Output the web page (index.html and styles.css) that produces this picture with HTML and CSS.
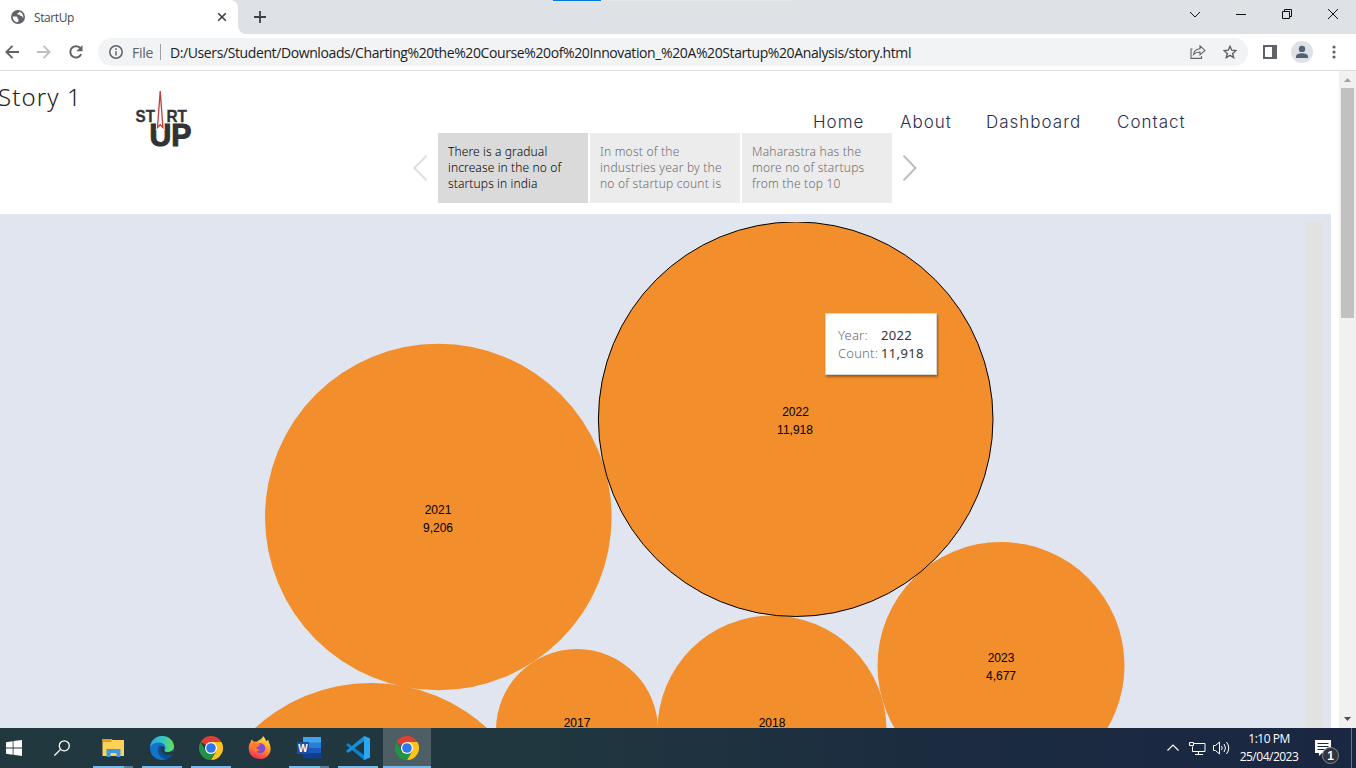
FILE: index.html
```html
<!DOCTYPE html>
<html lang="en">
<head>
<meta charset="utf-8">
<title>StartUp</title>
<link rel="stylesheet" href="styles.css">
</head>
<body>
<svg width="0" height="0" class="defs">
  <symbol id="chrome" viewBox="0 0 24 24">
    <path d="M12 12 1.6 6A12 12 0 0 1 22.4 6z" fill="#dd4034"/>
    <path d="M12 6H22.4A12 12 0 0 1 12 24l5.2-9z" fill="#fcc31e"/>
    <path d="M12 24A12 12 0 0 1 1.6 6l5.2 9 10.4 0z" fill="#229342"/>
    <circle cx="12" cy="12" r="6" fill="#fff"/><circle cx="12" cy="12" r="4.8" fill="#2f78ec"/>
  </symbol>
</svg>
<div class="tabstrip">
  <div class="tab">
    <svg class="favicon" width="14" height="14" viewBox="0 0 14 14"><circle cx="7" cy="7" r="7" fill="#5f6368"/><path d="M1.700 6.600h3.200c1 0 1.500.5 1.500 1.300v.9h1.100v2.300c-.2.800-.8 1.200-1.500 1.100C3.200 11.700 1.600 9.300 1.700 6.600zM8.200 1.800c-.2 1-.8 1.400-1.800 1.400v1.300h2.300v1.300h1.500c.8.200 1.100.8 1.200 1.600h.9C12.500 4.600 10.800 2.400 8.200 1.800z" fill="#fff"/></svg>
    <span class="tab-title">StartUp</span>
    <svg width="10" height="10" viewBox="0 0 10 10"><path d="M1.200 1.200l7.600 7.600M8.800 1.200L1.200 8.800" stroke="#3c4043" stroke-width="1.600"/></svg>
  </div>
  <svg class="curve" width="8" height="8"><path d="M0 0v8h8A8 8 0 0 1 0 0z" fill="#fff"/></svg>
  <svg class="newtab" width="12" height="12"><path d="M6 0v12M0 6h12" stroke="#3c4043" stroke-width="1.800"/></svg>
  <div class="loadbar"><i></i></div>
  <div class="winbtns">
    <svg width="12" height="12" fill="none" stroke="#111"><path d="M1 4l5 5 5-5"/></svg>
    <svg width="12" height="12" fill="none" stroke="#111"><path d="M1 6.500h10"/></svg>
    <svg width="12" height="12" fill="none" stroke="#111"><path d="M1.500 3.500h7v7h-7zM3.500 3.500v-2h7v7h-2"/></svg>
    <svg width="12" height="12" fill="none" stroke="#111"><path d="M1 1l10 10M11 1L1 11"/></svg>
  </div>
</div>
<div class="toolbar">
  <svg class="t-back" width="14" height="14" fill="none" stroke="#5f6368" stroke-width="1.900"><path d="M14 7H1.500M7.500 .8L1.300 7l6.200 6.200"/></svg>
  <svg class="t-fwd" width="14" height="14" fill="none" stroke="#bdc1c6" stroke-width="1.900"><path d="M0 7h12.500M6.500 .8L12.700 7l-6.200 6.200"/></svg>
  <svg class="t-reload" width="16" height="16" fill="none"><path d="M13.200 10.200A5.700 5.700 0 1 1 12 3.800" stroke="#5f6368" stroke-width="2"/><path d="M14.500 1v6.200H8.300z" fill="#5f6368"/></svg>
  <div class="omnibox">
    <svg width="14" height="14" fill="none" stroke="#5f6368" stroke-width="1.500"><circle cx="7" cy="7" r="6.200"/><path d="M7 6.200v4.300M7 3.300v1.700"/></svg>
    <span class="scheme">File</span><i class="sep"></i>
    <span class="url">D:/Users/Student/Downloads/Charting%20the%20Course%20of%20Innovation_%20A%20Startup%20Analysis/story.html</span>
    <svg class="share" width="16" height="14" fill="none" stroke="#5f6368" stroke-width="1.100"><path d="M2.500 4H1v9.400h10.500V11M3.500 9.500C4 6 6.500 3.800 10 3.700V.9l5 4.500-5 4.400V7C7 7 5 7.800 3.500 9.500z"/></svg>
    <svg class="star" width="14" height="14" fill="none" stroke="#5f6368" stroke-width="1.400"><path d="M7 1.300l1.700 3.900 4.200.4-3.200 2.800 1 4.200L7 10.400l-3.700 2.200 1-4.200L1.100 5.600l4.200-.4z"/></svg>
  </div>
  <svg class="panel" width="14" height="14"><path d="M0 0h14v14H0zM2 2v10h7V2z" fill="#5f6368" fill-rule="evenodd"/></svg>
  <svg class="avatar" width="22" height="22"><circle cx="11" cy="11" r="11" fill="#dee1e6"/><circle cx="11" cy="7.900" r="3.200" fill="#566075"/><path d="M5 17v-1.500c0-2 3-3.200 6-3.200s6 1.200 6 3.200V17z" fill="#566075"/></svg>
  <svg class="dots" width="4" height="14" fill="#5f6368"><circle cx="2" cy="2" r="1.600"/><circle cx="2" cy="7" r="1.600"/><circle cx="2" cy="12" r="1.600"/></svg>
</div>
<main class="viewport">
  <div class="page">
    <header class="masthead">
      <h1>Story 1</h1>
      <svg class="logo" width="58" height="60" viewBox="0 0 58 60">
        <g class="logo-text"><text x="0.500" y="33" font-size="17" textLength="19.500" lengthAdjust="spacingAndGlyphs">ST</text><text x="31.500" y="33" font-size="17" textLength="20.500" lengthAdjust="spacingAndGlyphs">RT</text>
        <text class="up" x="14.500" y="57" font-size="31" textLength="42" lengthAdjust="spacingAndGlyphs">UP</text></g>
        <path d="M25.200 3L22 39l3.200-3 3.200 3z" fill="#fff" stroke="#fff" stroke-width="2"/>
        <path d="M25.200 2L22.500 38.500l2.700-2.800 2.700 2.800z" fill="#fff" stroke="#c23c40" stroke-width="1.300"/>
      </svg>
      <nav><a class="n1">Home</a><a class="n2">About</a><a class="n3">Dashboard</a><a class="n4">Contact</a></nav>
    </header>
    <section class="story">
      <svg width="14" height="26" fill="none" stroke="#dedede" stroke-width="2"><path d="M13.500 .7L1.500 13l12 12.300"/></svg>
      <div class="points">
        <p class="on">There is a gradual<br>increase in the no of<br>startups in india</p>
        <p>In most of the<br>industries year by the<br>no of startup count is</p>
        <p>Maharastra has the<br>more no of startups<br>from the top 10</p>
      </div>
      <svg width="14" height="26" fill="none" stroke="#bdbdbd" stroke-width="2"><path d="M.5 .7l12 12.300-12 12.300"/></svg>
    </section>
    <section class="chart">
      <svg width="1306" height="506" viewBox="0 222 1306 506">
        <g fill="#f28e2b"><circle cx="438.300" cy="517" r="173.300"/><circle cx="1001" cy="665.500" r="123.500"/><circle cx="772" cy="730" r="114.500"/><circle cx="577" cy="730" r="81"/><circle cx="371" cy="855" r="172"/><circle cx="795.700" cy="419.200" r="197.300" stroke="#000"/></g>
        <g class="labels"><text x="795.500" y="416">2022</text><text x="795" y="434">11,918</text><text x="438" y="514">2021</text><text x="438" y="532">9,206</text><text x="1001" y="662">2023</text><text x="1001" y="680">4,677</text><text x="577" y="727">2017</text><text x="772" y="727">2018</text></g>
      </svg>
      <div class="legend"></div>
      <dl class="tip"><dt>Year:</dt><dd>2022</dd><dt>Count:</dt><dd>11,918</dd></dl>
    </section>
  </div>
  <div class="scroll">
    <svg width="17" height="17"><path d="M5 11h7L8.500 7z" fill="#a3a3a3"/></svg>
    <div class="thumb"></div>
    <svg width="17" height="17"><path d="M5 6h7l-3.500 4z" fill="#505050"/></svg>
  </div>
</main>
<footer class="taskbar">
  <svg class="win" width="16" height="16" fill="#fff"><path d="M0 2.200L6.700 1.200v6.300H0zM7.500 1.100L16 0v7.500H7.500zM0 8.500h6.700v6.300L0 13.800zM7.500 8.500H16V16l-8.500-1.200z"/></svg>
  <svg class="search" width="16" height="16" fill="none" stroke="#fff" stroke-width="1.300"><circle cx="10.300" cy="5.800" r="5"/><path d="M6.600 9.400L.4 15.600"/></svg>
  <div class="apps">
    <span class="app multi"><svg width="22" height="24" viewBox="0 0 22 24"><path d="M.5 3h9l1 1H22v16H.5z" fill="#ffd257"/><path d="M.5 3h9v3h-9z" fill="#e5a00d"/><path d="M4.500 21v-8h14v8h-4v-4h-6v4z" fill="#3f97dc"/></svg></span>
    <span class="app"><svg width="24" height="24" viewBox="0 0 24 24"><defs><linearGradient id="eg"><stop stop-color="#2aa5e0"/><stop offset=".5" stop-color="#35c5c9"/><stop offset="1" stop-color="#65de50"/></linearGradient></defs><circle cx="12" cy="12" r="12" fill="#1273c9"/><path d="M0 11C1 4 6 0 12 0c7 0 12 5 12 10.500 0 3.500-3 5.500-6 5.500-2 0-3.500-.6-3.500-1.600 0-.8 1-1.200 1-2.700C15.500 9 13 6.500 9 6.500 5 6.500 1.500 8.500 0 11z" fill="url(#eg)"/><path d="M9 10c-3 6 1 13 8 13 2.500-.8 4.500-2.500 5.600-4.600C17 21 10.500 18 10.500 13c0-1.500.5-2 1.500-2.900A5 5 0 0 0 9 10z" fill="#0c4d98"/><path d="M10.500 13c0-1.700 1-2.800 2-3 1.500.6 2.500 2.300 1.900 3.700-1 1.700 1.800 3.300 5.600 2.100l3.600-1.600-1 4.200C17 21 10.500 18 10.500 13z" fill="#213b43"/></svg></span>
    <span class="app"><svg width="24" height="24"><use href="#chrome"/></svg></span>
    <span class="app idle"><svg width="24" height="24" viewBox="0 0 24 24"><defs><linearGradient id="fg" x1=".7" x2=".3" y1="0" y2="1"><stop stop-color="#ffe84b"/><stop offset=".5" stop-color="#ff9225"/><stop offset="1" stop-color="#f3245f"/></linearGradient></defs><path d="M15 0c2 2 2.700 3.600 3 5l2.500-1c-.1 1.600.5 2.500 1.200 4 3 8-2 15-9.500 15S.5 18 .7 11.500c.1-2.700 1-4 2-5.500l.6-2.400 2.400 2 3.400.1C10.500 4 14 3.500 15 0z" fill="url(#fg)"/><circle cx="12.300" cy="12.300" r="5" fill="#8547d5"/><path d="M3.500 7c3-1.500 5-.5 6 1l3 .6c-.5 1.700-2 1.700-3.500 2.400-1 1.400.5 3 3 2.600-1.500 2.800-6 2.200-7.200-.6z" fill="#ff7a2c"/></svg></span>
    <span class="app multi"><svg width="24" height="24" viewBox="0 0 24 24"><path d="M6 1h18v6H6z" fill="#41a5ee"/><path d="M6 6.500h18v5.500H6z" fill="#2b7cd3"/><path d="M6 12h18v5.500H6z" fill="#185abd"/><path d="M6 17h18v5.500H6z" fill="#103f91"/><path d="M0 6h12v12H0z" fill="#174ea6"/><text class="word" x="6" y="15.500">W</text></svg></span>
    <span class="app"><svg width="24" height="24" viewBox="0 0 24 24"><path d="M18 0l6 2.500v19L18 24 0 9l2-2 16 12z" fill="#0b83cb"/><path d="M0 15l2 2L18 5V0z" fill="#178fda"/><path d="M18 0l6 2.500v19L18 24z" fill="#2aa9f2"/><path d="M18 6.500v11L10.500 12z" fill="#213840"/></svg></span>
    <span class="app active"><svg width="24" height="24"><use href="#chrome"/></svg></span>
  </div>
  <div class="tray">
    <svg width="12" height="7" fill="none" stroke="#fff" stroke-width="1.200"><path d="M.5 6.500l5.500-5.500 5.500 5.500"/></svg>
    <svg class="net" width="17" height="15" fill="none" stroke="#fff"><path d="M5 2.500h11v8H3.500V5.500M.5 1.500h4v3h-4zM9.500 10.500v3M6 13.500h8"/></svg>
    <svg class="vol" width="17" height="14" fill="none" stroke="#fff"><path d="M.5 4.500h2l4-3.500v12l-4-3.500h-2zM8.500 5q1.500 2 0 4M11 3q3 4 0 8M13.500 1q4.500 6 0 12"/></svg>
    <div class="clock"><span>1:10 PM</span><span>25/04/2023</span></div>
    <svg class="note" width="26" height="26"><path d="M0 1h16v13H7l-3 3v-3H0z" fill="#fff"/><path d="M2.500 4.500h11M2.500 7.500h11M2.500 10.500h7" stroke="#1a2843"/><circle cx="15.500" cy="16.500" r="8" fill="#30343c" stroke="#858990"/><text class="badge" x="15.500" y="21">1</text></svg>
    <i class="edge"></i>
  </div>
</footer>
</body>
</html>
```
FILE: styles.css
```css
* { box-sizing: border-box; }
body { margin: 0; width: 1356px; height: 768px; overflow: hidden; display: flex; flex-direction: column; background: #fff; font-family: "Open Sans", "Noto Sans", sans-serif; }
svg { display: block; flex: none; }
.defs { position: absolute; }
h1, p, dl, dd { margin: 0; }

.tabstrip { height: 34px; flex: none; display: flex; background: #dee1e6; }
.tab { width: 238px; height: 34px; display: flex; align-items: center; padding: 0 11px 0 11px; background: #fff; border-radius: 0 8px 0 0; }
.tab-title { flex: 1; margin-left: 9px; font-size: 12px; letter-spacing: -.4px; color: #45494d; }
.curve { align-self: flex-end; }
.newtab { margin: 11px 0 0 8px; }
.loadbar { margin-left: 287px; width: 240px; height: 1px; background: #e7e7e7; }
.loadbar i { display: block; width: 48px; height: 1px; background: #0078d7; }
.winbtns { margin: 8px 17px 0 auto; display: flex; gap: 34px; }

.toolbar { height: 37px; flex: none; display: flex; align-items: center; border-bottom: 1px solid #dadce0; padding-left: 5px; }
.t-fwd { margin-left: 18px; }
.t-reload { margin-left: 17px; }
.omnibox { width: 1150px; height: 28px; margin-left: 14px; border-radius: 14px; background: #f1f3f4; display: flex; align-items: center; padding: 0 11px; font-size: 14px; white-space: nowrap; }
.scheme { margin-left: 9px; width: 22px; color: #5f6368; letter-spacing: -.3px; }
.sep { width: 1px; height: 16px; background: #9aa0a6; margin: 0 9px 0 6px; }
.url { color: #202124; letter-spacing: -.395px; }
.share { margin-left: auto; }
.star { margin: 0 0 0 17px; }
.panel { margin-left: 15px; }
.avatar { margin-left: 14px; }
.dots { margin-left: 19px; }

.viewport { height: 657px; flex: none; display: flex; }
.page { width: 1339px; display: flex; flex-direction: column; }
.masthead { height: 62px; display: flex; align-items: flex-start; }
h1 { width: 135px; margin-top: 9px; font: 300 24px/34px "Noto Sans", sans-serif; letter-spacing: 1.1px; color: #222; white-space: nowrap; text-indent: -2px; }
.logo { margin-top: 18px; }
.logo-text { font-family: "Liberation Sans", sans-serif; font-weight: 700; fill: #333; stroke: #333; stroke-width: .3px; }
.up { stroke-width: 1.1px; }
nav { display: flex; margin: 38px 0 0 620px; font: 300 17px/26px Inter, sans-serif; letter-spacing: 1px; color: #2b3050; }
nav a { white-space: nowrap; }
.n1 { width: 87px; } .n2 { width: 86px; } .n3 { width: 131px; }
.story { height: 81px; display: flex; padding-left: 413px; }
.story > svg { margin-top: 22px; }
.points { display: flex; gap: 2px; margin: 0 11px; }
.points p { width: 150px; height: 70px; padding: 11px 0 0 10px; background: #ececec; color: #6c6c6c; font: 300 12px/16px "Noto Sans", sans-serif; letter-spacing: .22px; white-space: nowrap; }
.points .on { background: #dadada; color: #000; letter-spacing: .12px; }
.chart { position: relative; width: 1331px; height: 514px; padding-top: 8px; display: flex; background: #e1e5f0; }
.legend { width: 17px; background: #e2e2e0; }
.labels { font: 12px "Liberation Sans", sans-serif; text-anchor: middle; fill: #000; }
.tip { position: absolute; left: 825px; top: 99px; width: 112px; height: 62px; padding: 12px 0 0 12px; display: grid; grid-template: 18px 18px / 43px auto; background: #fff; border: 1px solid #d4d4d4; box-shadow: 1px 2px 2px rgba(0,0,0,.35); font: 13px/18px "Noto Sans", sans-serif; }
dt { color: #6c6c6c; font-weight: 300; letter-spacing: .2px; }
dd { color: #333; letter-spacing: .35px; }
.scroll { width: 17px; background: #f1f1f1; display: flex; flex-direction: column; }
.thumb { width: 13px; height: 230px; margin: 0 2px auto; background: #c1c1c1; }

.taskbar { height: 40px; flex: none; display: flex; background: linear-gradient(90deg, #22383f 0%, #20373f 40%, #1b2b40 70%, #1a2742 100%); color: #fff; }
.win { margin: 12px 0 0 6px; }
.search { margin: 12px 0 0 32px; }
.apps { display: flex; margin-left: 19px; }
.app { width: 49px; padding: 8px 0 0 12px; background: linear-gradient(#76b9ed, #76b9ed) 4px 38px / 40px 2px no-repeat; }
.app:first-child { padding-left: 13px; }
.multi { background: linear-gradient(90deg, #76b9ed 31px, #557f9d 31px) 4px 38px / 40px 2px no-repeat; }
.app.idle { background: none; }
.app.active { width: 48px; background: linear-gradient(#76b9ed, #76b9ed) 0 38px / 48px 2px no-repeat, #4d5e65; }
.word { font: bold 10px "Liberation Sans", sans-serif; fill: #fff; text-anchor: middle; }
.tray { margin-left: auto; display: flex; }
.tray > svg { margin-top: 16px; }
.tray .net { margin: 13px 0 0 10px; }
.tray .vol { margin: 13px 0 0 7px; }
.clock { width: 70px; margin-left: 4px; padding-top: 2px; display: flex; flex-direction: column; text-align: center; font-size: 12px; line-height: 18px; letter-spacing: -.5px; margin-right: 11px; }
.tray .note { margin-top: 11px; }
.badge { font: bold 12px "Liberation Sans", sans-serif; fill: #fff; text-anchor: middle; }
.edge { width: 1px; margin: 0 4px 0 10px; background: #69738a; }
```
